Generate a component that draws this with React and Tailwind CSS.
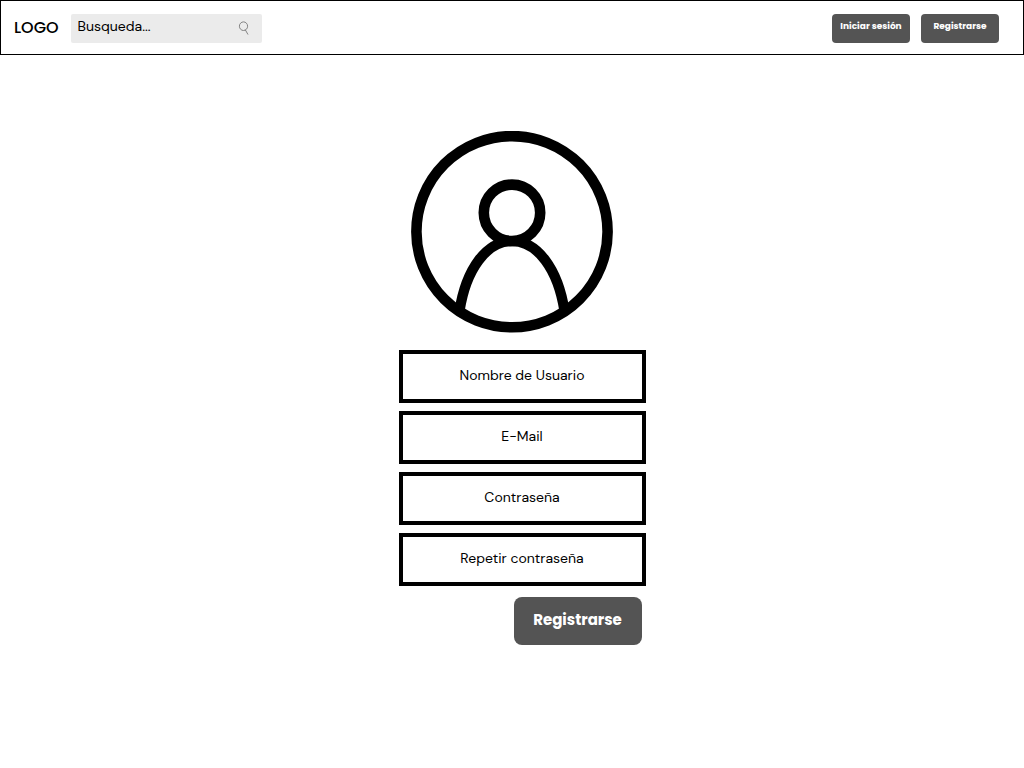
const fields = [
  { id: 'username', type: 'text', label: 'Nombre de Usuario', autoComplete: 'username' },
  { id: 'email', type: 'email', label: 'E-Mail', autoComplete: 'email' },
  { id: 'password', type: 'password', label: 'Contraseña', autoComplete: 'new-password' },
  { id: 'repeat', type: 'password', label: 'Repetir contraseña', autoComplete: 'new-password' },
];

function SearchIcon() {
  return (
    <svg className="h-4 w-3 shrink-0" viewBox="0 0 12 16" fill="none" stroke="#777777" strokeWidth="0.9" aria-hidden="true">
      <ellipse cx="5.5" cy="6.2" rx="4.1" ry="4.3" />
      <path d="M7.4 10 9.8 14.2" strokeLinecap="round" />
    </svg>
  );
}

function Avatar() {
  return (
    <svg className="h-[202px] w-[202px]" viewBox="0 0 202 202" fill="none" stroke="#000000" strokeWidth="10.6" aria-hidden="true">
      <circle cx="101" cy="100.700" r="95.6" />
      <circle cx="101" cy="81.800" r="28.2" />
      <path strokeWidth="10.2" d="M48.500 180C55 138 75.500 110.200 101 110.200S147 138 153.500 180" />
    </svg>
  );
}

function NavButton({ children }) {
  return (
    <button type="button" className="h-[29px] w-[78px] rounded bg-[#545454] pb-0.5 font-['Poppins','Inter',sans-serif] text-[9px] font-bold whitespace-nowrap text-white">
      {children}
    </button>
  );
}

export default function App() {
  return (
    <div className="min-h-screen bg-white font-['DM_Sans','Inter',sans-serif] text-black">
      <header className="flex h-[55px] items-center justify-between border border-black pt-px pr-6 pl-[13px]">
        <div className="flex items-center gap-3">
          <a href="#" className="font-['Poppins','Inter',sans-serif] text-base font-medium">LOGO</a>
          <div className="flex h-[29px] w-[191px] items-center rounded-xs bg-[#ebebeb] pr-3 pl-[7px]">
            <input
              type="search"
              aria-label="Busqueda"
              placeholder="Busqueda..."
              className="min-w-0 flex-1 bg-transparent pb-1 text-sm outline-none placeholder:text-black"
            />
            <SearchIcon />
          </div>
        </div>
        <nav className="flex gap-[11px]">
          <NavButton>Iniciar sesión</NavButton>
          <NavButton>Registrarse</NavButton>
        </nav>
      </header>

      <main className="flex flex-col items-center pt-19">
        <Avatar />
        <form className="mt-[17px] ml-5 flex w-[247px] flex-col gap-2">
          {fields.map((field) => (
            <input
              key={field.id}
              id={field.id}
              name={field.id}
              type={field.type}
              aria-label={field.label}
              placeholder={field.label}
              autoComplete={field.autoComplete}
              className="h-[53px] w-full border-4 border-black pb-1 text-center text-sm outline-none placeholder:text-black"
            />
          ))}
          <button type="submit" className="mt-[3px] mr-1 h-12 w-32 self-end rounded-lg bg-[#545454] pb-0.5 font-['Poppins','Inter',sans-serif] text-[15px] font-bold text-white">
            Registrarse
          </button>
        </form>
      </main>
    </div>
  );
}
